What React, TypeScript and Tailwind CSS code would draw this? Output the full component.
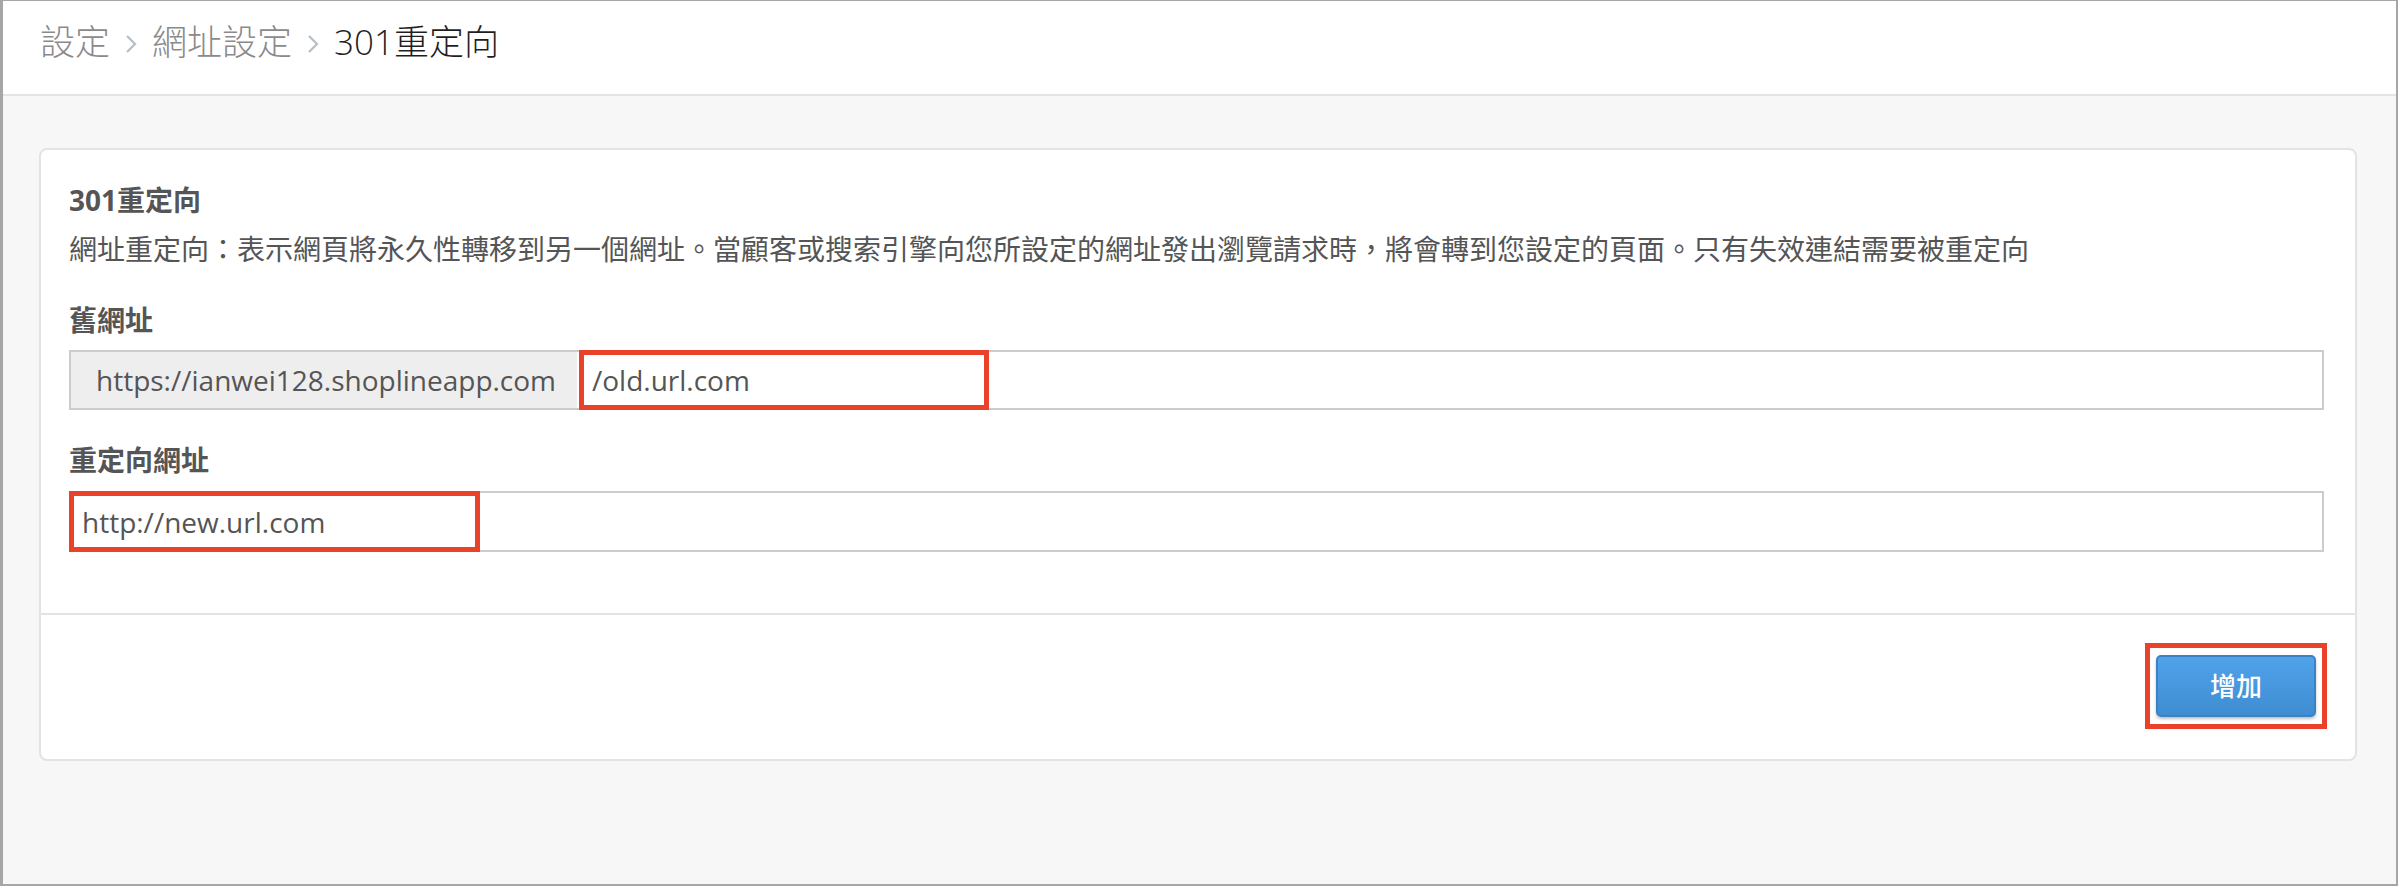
import React from 'react';

const Chevron: React.FC = () => (
  <svg width="12" height="20" viewBox="0 0 12 20" className="mx-[15px] mt-[4px]">
    <polyline points="2,2 10,10 2,18" fill="none" stroke="#b7bec8" strokeWidth="2.2" />
  </svg>
);

const App: React.FC = () => {
  return (
    <div className="h-[886px] w-[2398px] box-border border-t border-l-[3px] border-r-2 border-b-2 border-[#a6a6a6] bg-[#f7f7f7] flex flex-col font-['Open_Sans','Noto_Sans_CJK_TC',sans-serif] overflow-hidden">
      {/* Breadcrumb header */}
      <div className="h-[95px] bg-white border-b-2 border-[#e4e4e4] flex items-center pl-[37px] pb-[12px]">
        <span className="text-[35px] font-light text-[#8a8a8a] leading-none">設定</span>
        <Chevron />
        <span className="text-[35px] font-light text-[#8a8a8a] leading-none">網址設定</span>
        <Chevron />
        <span className="text-[35px] font-light text-[#1f1f1f] leading-none">301重定向</span>
      </div>

      {/* Content */}
      <div className="pl-[36px] pr-[39px] pt-[52px]">
        <div className="bg-white border-2 border-[#e3e3e3] rounded-[8px]">
          <div className="pl-[28px] pr-[31px] pt-[30px] pb-[61px] text-[#555555]">
            <div className="text-[28px] leading-[40px] font-bold">301重定向</div>
            <div className="mt-[9px] text-[28px] leading-[40px]">
              網址重定向：表示網頁將永久性轉移到另一個網址。當顧客或搜索引擎向您所設定的網址發出瀏覽請求時，將會轉到您設定的頁面。只有失效連結需要被重定向
            </div>

            <div className="mt-[31px] text-[28px] leading-[40px] font-bold">舊網址</div>
            <div className="relative mt-[10px] h-[60px] flex border-2 border-[#cccccc] bg-white">
              <div className="w-[506px] bg-[#eeeeee] flex items-center pl-[25px] text-[28px] text-[#555555]">
                https://ianwei128.shoplineapp.com
              </div>
              <div className="flex-1 flex items-center pl-[15px] text-[28px] text-[#555555]">/old.url.com</div>
              <div className="absolute -top-[2px] -bottom-[2px] left-[508px] w-[410px] border-[5px] border-[#e9412a]" />
            </div>

            <div className="mt-[30px] text-[28px] leading-[40px] font-bold">重定向網址</div>
            <div className="relative mt-[11px] h-[61px] flex items-center border-2 border-[#cccccc] bg-white pl-[11px] text-[28px] text-[#555555]">
              http://new.url.com
              <div className="absolute -top-[2px] -bottom-[2px] -left-[2px] w-[411px] border-[5px] border-[#e9412a]" />
            </div>
          </div>

          <div className="border-t-2 border-[#e3e3e3] flex justify-end pr-[28px] pt-[28px] pb-[30px]">
            <div className="border-[5px] border-[#e9412a] px-[6px] py-[7px]">
              <button className="w-[160px] h-[62px] rounded-[5px] border-2 border-[#3b82c4] bg-gradient-to-b from-[#50a3ea] to-[#3f8dd1] shadow-[0_2px_3px_rgba(0,0,0,0.25)] text-white text-[26px] font-medium">
                增加
              </button>
            </div>
          </div>
        </div>
      </div>
    </div>
  );
};

export default App;
